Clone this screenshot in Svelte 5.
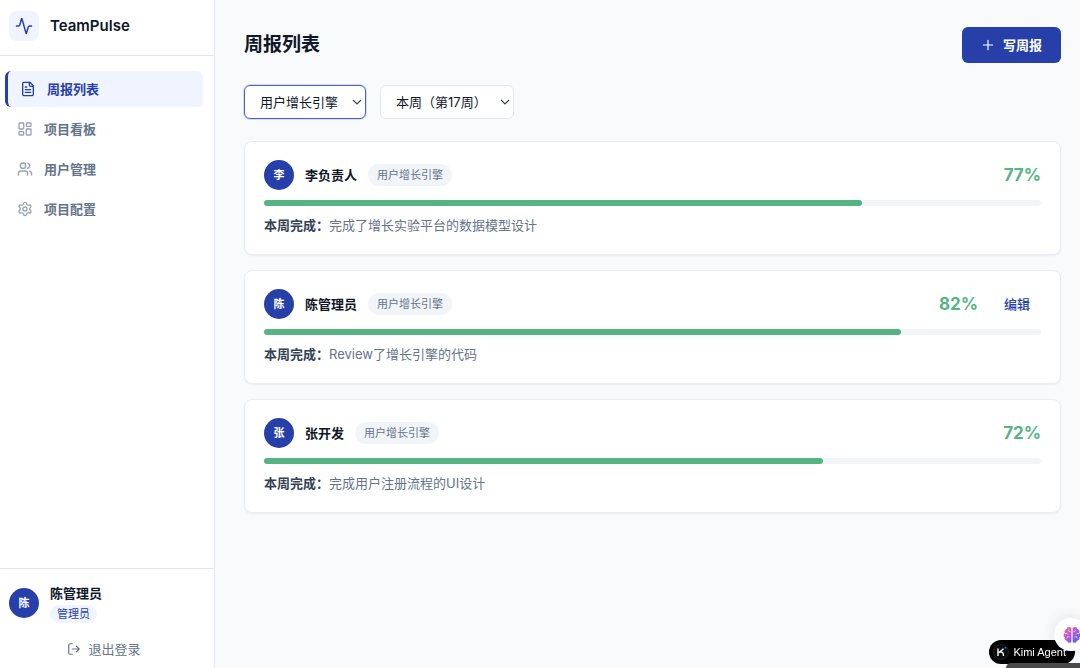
<script lang="ts">
    interface Report {
        id: number;
        author: string;
        project: string;
        progress: number;
        done: string;
        editable: boolean;
    }

    let project: string = $state('growth');
    let week: string = $state('17');

    const navItems = [
        { icon: 'file', label: '周报列表', active: true },
        { icon: 'board', label: '项目看板', active: false },
        { icon: 'users', label: '用户管理', active: false },
        { icon: 'settings', label: '项目配置', active: false }
    ];

    const reports: Report[] = [
        { id: 1, author: '李负责人', project: '用户增长引擎', progress: 77, done: '完成了增长实验平台的数据模型设计', editable: false },
        { id: 2, author: '陈管理员', project: '用户增长引擎', progress: 82, done: 'Review了增长引擎的代码', editable: true },
        { id: 3, author: '张开发', project: '用户增长引擎', progress: 72, done: '完成用户注册流程的UI设计', editable: false }
    ];
</script>

{#snippet icon(name: string, size: number)}
    <svg
        width={size}
        height={size}
        viewBox="0 0 24 24"
        fill="none"
        stroke="currentColor"
        stroke-width="2"
        stroke-linecap="round"
        stroke-linejoin="round"
        aria-hidden="true"
    >
        {#if name === 'pulse'}
            <path d="M22 12h-2.48a2 2 0 0 0-1.93 1.46l-2.35 8.36a.25.25 0 0 1-.48 0L9.24 2.18a.25.25 0 0 0-.48 0l-2.35 8.36A2 2 0 0 1 4.49 12H2" />
        {:else if name === 'file'}
            <path d="M15 2H6a2 2 0 0 0-2 2v16a2 2 0 0 0 2 2h12a2 2 0 0 0 2-2V7Z" />
            <path d="M14 2v4a2 2 0 0 0 2 2h4M10 9H8M16 13H8M16 17H8" />
        {:else if name === 'board'}
            <rect width="7" height="9" x="3" y="3" rx="1" />
            <rect width="7" height="5" x="14" y="3" rx="1" />
            <rect width="7" height="9" x="14" y="12" rx="1" />
            <rect width="7" height="5" x="3" y="16" rx="1" />
        {:else if name === 'users'}
            <path d="M16 21v-2a4 4 0 0 0-4-4H6a4 4 0 0 0-4 4v2" />
            <circle cx="9" cy="7" r="4" />
            <path d="M22 21v-2a4 4 0 0 0-3-3.87M16 3.13a4 4 0 0 1 0 7.75" />
        {:else if name === 'settings'}
            <path d="M9.671 4.136a2.34 2.34 0 0 1 4.659 0 2.34 2.34 0 0 0 3.319 1.915 2.34 2.34 0 0 1 2.33 4.033 2.34 2.34 0 0 0 0 3.831 2.34 2.34 0 0 1-2.33 4.033 2.34 2.34 0 0 0-3.319 1.915 2.34 2.34 0 0 1-4.659 0 2.34 2.34 0 0 0-3.32-1.915 2.34 2.34 0 0 1-2.33-4.033 2.34 2.34 0 0 0 0-3.831A2.34 2.34 0 0 1 6.35 6.051a2.34 2.34 0 0 0 3.319-1.915" />
            <circle cx="12" cy="12" r="3" />
        {:else if name === 'logout'}
            <path d="M9 21H5a2 2 0 0 1-2-2V5a2 2 0 0 1 2-2h4M16 17l5-5-5-5M21 12H9" />
        {:else if name === 'plus'}
            <path d="M4 12h16M12 4v16" />
        {/if}
    </svg>
{/snippet}

<div class="layout">
    <aside class="sidebar">
        <div class="brand">
            <span class="brand-logo">{@render icon('pulse', 18)}</span>
            <span class="brand-name">TeamPulse</span>
        </div>

        <nav class="nav">
            {#each navItems as item}
                <a href="#{item.icon}" class="nav-item" class:active={item.active}>
                    {@render icon(item.icon, 16)}
                    <span>{item.label}</span>
                </a>
            {/each}
        </nav>

        <div class="account">
            <div class="account-user">
                <span class="avatar">陈</span>
                <div>
                    <div class="account-name">陈管理员</div>
                    <span class="role">管理员</span>
                </div>
            </div>
            <button type="button" class="logout">
                {@render icon('logout', 14)}
                退出登录
            </button>
        </div>
    </aside>

    <main class="content">
        <header class="page-header">
            <h1>周报列表</h1>
            <button type="button" class="btn-primary">
                {@render icon('plus', 14)}
                写周报
            </button>
        </header>

        <div class="filters">
            <select class="filter selected" aria-label="项目" bind:value={project}>
                <option value="growth">用户增长引擎</option>
            </select>
            <select class="filter" aria-label="周次" bind:value={week}>
                <option value="17">本周（第17周）</option>
            </select>
        </div>

        <div class="reports">
            {#each reports as report (report.id)}
                <article class="card">
                    <div class="card-head">
                        <span class="avatar">{report.author[0]}</span>
                        <span class="author">{report.author}</span>
                        <span class="tag">{report.project}</span>
                        <span class="percent">{report.progress}%</span>
                        {#if report.editable}
                            <button type="button" class="edit">编辑</button>
                        {/if}
                    </div>
                    <div class="track">
                        <div class="bar" style="width: {report.progress}%"></div>
                    </div>
                    <p class="summary"><strong>本周完成：</strong>{report.done}</p>
                </article>
            {/each}
        </div>
    </main>
</div>

<div class="dock"></div>
<a href="#kimi" class="kimi">
    <svg width="16" height="16" viewBox="0 0 16 16" aria-hidden="true">
        <circle cx="8" cy="8" r="7.5" fill="#0b0b0d" stroke="#333" stroke-width="0.6" />
        <path d="M5 4.500v7.500M10.500 4.700L6 8.600M7 7.900c2.500-.1 3.500 1.100 3.500 4.100" fill="none" stroke="#fff" stroke-width="1.400" />
        <circle cx="12.4" cy="3.800" r="0.9" fill="#2f7cf6" />
    </svg>
    Kimi Agent
</a>
<button type="button" class="assistant" aria-label="助手">
    <svg width="18" height="18" viewBox="0 0 18 18" aria-hidden="true">
        <defs>
            <linearGradient id="brain" x1="0" y1="0" x2="1" y2="1">
                <stop offset="0" stop-color="#f5824a" />
                <stop offset="0.4" stop-color="#c253d8" />
                <stop offset="1" stop-color="#3d6bf5" />
            </linearGradient>
        </defs>
        <path
            d="M8.400 2.500C7 .2 4 .9 3.700 3.100 1.800 3.500 1 5.400 1.800 6.900.2 8 .2 10.300 1.600 11.300c-.4 2 .9 3.500 2.600 3.600.8 2.300 3.500 2.500 4.200.5zM9.600 2.500c1.400-2.300 4.400-1.600 4.700.6 1.900.4 2.700 2.300 1.900 3.800 1.600 1.100 1.600 3.400.2 4.400.4 2-.9 3.500-2.600 3.600-.8 2.300-3.500 2.500-4.200.5z"
            fill="url(#brain)"
        />
        <path
            d="M2.500 7.500c1-.5 1.700-.2 2.200.6M5.800 4.200c-.3 1 .4 1.700 1.200 1.700M3.800 12c.2-1.200 1.200-1.700 2.300-1.200M15.500 7.500c-1-.5-1.700-.2-2.200.6M12.200 4.200c.3 1-.4 1.700-1.200 1.700M14.200 12c-.2-1.200-1.200-1.700-2.300-1.200"
            fill="none"
            stroke="#fff"
            stroke-width="0.7"
            stroke-linecap="round"
        />
    </svg>
</button>

<style>
    :global(body) {
        margin: 0;
        background: #f9fafc;
    }

    :global(#app) {
        font-family: Inter, "Noto Sans CJK SC", sans-serif;
        font-size: 13px;
        line-height: 20px;
        color: #0f172a;
    }

    button,
    select {
        font: inherit;
        cursor: pointer;
    }

    button {
        border: 0;
        background: none;
    }

    svg {
        flex-shrink: 0;
    }

    .layout {
        display: grid;
        grid-template-columns: 215px 1fr;
        min-height: 100vh;
    }

    .sidebar {
        position: sticky;
        top: 0;
        box-sizing: border-box;
        height: 100vh;
        display: flex;
        flex-direction: column;
        background: #fff;
        border-right: 1px solid #e2e8f0;
    }

    .brand {
        display: flex;
        align-items: center;
        gap: 11px;
        padding: 11px 9px 14px;
        border-bottom: 1px solid #e2e8f0;
    }

    .brand-logo {
        display: grid;
        place-items: center;
        width: 30px;
        height: 30px;
        border-radius: 8px;
        background: #eff4ff;
        color: #263fa9;
    }

    .brand-name {
        font-size: 15px;
        font-weight: 600;
    }

    .nav {
        flex: 1;
        display: flex;
        flex-direction: column;
        gap: 4px;
        padding: 15px 11px 14px 5px;
    }

    .nav-item {
        display: flex;
        align-items: center;
        gap: 11px;
        padding: 8px 12px;
        border-radius: 6px;
        color: #64748b;
        font-weight: 600;
        text-decoration: none;
    }

    .nav-item svg {
        color: #94a3b8;
    }

    .nav-item.active {
        border-left: 3px solid #263fa9;
        background: #eff4ff;
        color: #263fa9;
    }

    .nav-item.active svg {
        color: inherit;
    }

    .account {
        padding: 14px 15px 3px 9px;
        border-top: 1px solid #e2e8f0;
    }

    .account-user {
        display: flex;
        align-items: center;
        gap: 11px;
    }

    .account-name {
        font-weight: 600;
    }

    .avatar {
        display: grid;
        place-items: center;
        flex-shrink: 0;
        width: 30px;
        height: 30px;
        border-radius: 50%;
        background: #263fa9;
        color: #fff;
        font-size: 11px;
        font-weight: 600;
    }

    .role {
        display: block;
        width: fit-content;
        margin-top: 2px;
        padding: 0 7px;
        border-radius: 9px;
        background: #eff4ff;
        color: #263fa9;
        font-size: 11px;
        line-height: 18px;
    }

    .logout {
        display: flex;
        align-items: center;
        justify-content: center;
        gap: 7px;
        width: 100%;
        margin-top: 10px;
        padding: 6px;
        color: #64748b;
    }

    .content {
        min-width: 0;
        padding: 27px 19px 27px 29px;
    }

    .page-header {
        display: flex;
        align-items: center;
        justify-content: space-between;
    }

    h1 {
        margin: 0;
        font-size: 19px;
        font-weight: 600;
        line-height: 28px;
    }

    .btn-primary {
        display: flex;
        align-items: center;
        gap: 8px;
        padding: 8px 19px;
        border-radius: 6px;
        background: #263fa9;
        color: #fff;
        font-weight: 600;
    }

    .filters {
        display: flex;
        gap: 14px;
        margin: 22px 0;
    }

    .filter {
        appearance: none;
        height: 34px;
        padding: 0 26px 0 15px;
        border: 1px solid #e2e8f0;
        border-radius: 6px;
        background: #fff url("data:image/svg+xml,%3Csvg xmlns='http://www.w3.org/2000/svg' width='10' height='6' viewBox='0 0 10 6'%3E%3Cpath d='M1 1l4 4 4-4' fill='none' stroke='%23334155' stroke-width='1.1'/%3E%3C/svg%3E") no-repeat right 3px center;
        color: #0f172a;
    }

    .filter.selected {
        border-color: #4a60c4;
        box-shadow: 0 0 0 1px #d5dcf5;
    }

    .reports {
        display: flex;
        flex-direction: column;
        gap: 15px;
    }

    .card {
        padding: 18px 19px;
        border: 1px solid #e8edf4;
        border-radius: 8px;
        background: #fff;
        box-shadow: 0 1px 2px rgba(15, 23, 42, 0.06);
    }

    .card-head {
        display: flex;
        align-items: center;
        gap: 11px;
    }

    .author {
        font-weight: 600;
    }

    .tag {
        padding: 0 9px;
        border-radius: 11px;
        background: #f1f5f9;
        color: #64748b;
        font-size: 11px;
        line-height: 22px;
    }

    .percent {
        margin-left: auto;
        color: #54b583;
        font-size: 17px;
        font-weight: 700;
    }

    .edit {
        margin-left: 4px;
        padding: 4px 11px;
        color: #263fa9;
        font-weight: 500;
    }

    .track {
        height: 6px;
        margin: 10px 0 9px;
        border-radius: 3px;
        background: #f1f5f9;
    }

    .bar {
        height: 100%;
        border-radius: 3px;
        background: #54b583;
    }

    .summary {
        margin: 0;
        padding-bottom: 1px;
        color: #64748b;
    }

    .summary strong {
        color: #334155;
        font-weight: 600;
    }

    /* floating widgets in the bottom right corner */
    .dock {
        position: fixed;
        right: 0;
        bottom: 0;
        z-index: 2;
        width: 74px;
        height: 5px;
        border-radius: 5px 0 0 0;
        background: #4a4a4a;
    }

    .kimi {
        position: fixed;
        right: 5px;
        bottom: 4px;
        z-index: 1;
        display: flex;
        align-items: center;
        gap: 4px;
        height: 24px;
        padding: 0 9px 0 4px;
        border-radius: 12px;
        background: #000;
        color: #fff;
        font-family: "Liberation Sans", Arial, sans-serif;
        font-size: 11px;
        text-decoration: none;
    }

    .assistant {
        position: fixed;
        right: -8px;
        bottom: 17px;
        z-index: 3;
        display: flex;
        align-items: center;
        width: 34px;
        height: 33px;
        padding: 0 0 0 9px;
        border-radius: 17px;
        background: #fff;
        box-shadow: 0 0 14px rgba(15, 23, 42, 0.12);
    }
</style>
